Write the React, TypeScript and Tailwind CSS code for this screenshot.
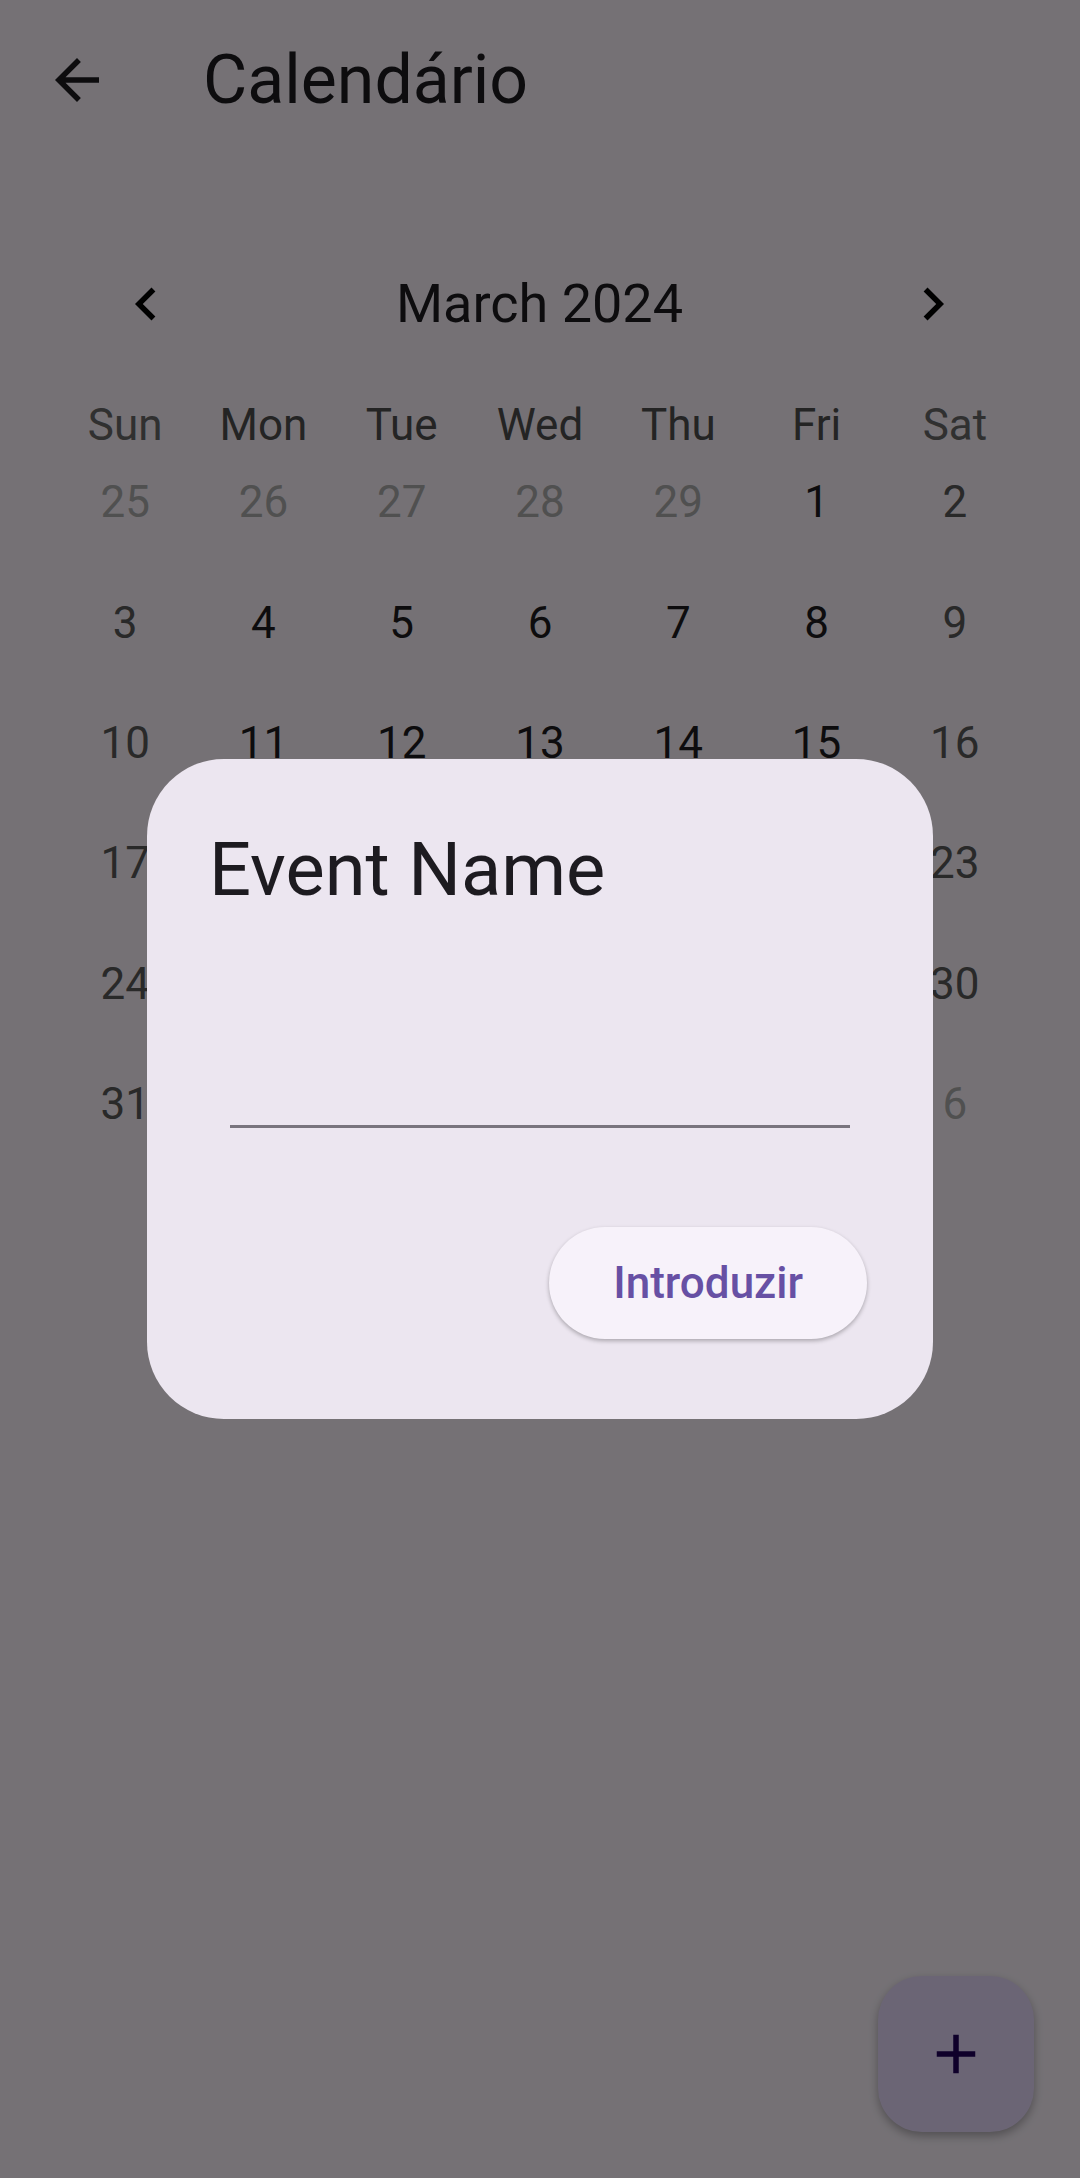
import React from 'react';

const weekdays = ['Sun', 'Mon', 'Tue', 'Wed', 'Thu', 'Fri', 'Sat'];

// March 2024 grid, including outside days
const weeks: { d: number; out?: boolean }[][] = [
  [{ d: 25, out: true }, { d: 26, out: true }, { d: 27, out: true }, { d: 28, out: true }, { d: 29, out: true }, { d: 1 }, { d: 2 }],
  [{ d: 3 }, { d: 4 }, { d: 5 }, { d: 6 }, { d: 7 }, { d: 8 }, { d: 9 }],
  [{ d: 10 }, { d: 11 }, { d: 12 }, { d: 13 }, { d: 14 }, { d: 15 }, { d: 16 }],
  [{ d: 17 }, { d: 18 }, { d: 19 }, { d: 20 }, { d: 21 }, { d: 22 }, { d: 23 }],
  [{ d: 24 }, { d: 25 }, { d: 26 }, { d: 27 }, { d: 28 }, { d: 29 }, { d: 30 }],
  [{ d: 31 }, { d: 1, out: true }, { d: 2, out: true }, { d: 3, out: true }, { d: 4, out: true }, { d: 5, out: true }, { d: 6, out: true }],
];

function dayColor(col: number, out?: boolean) {
  if (out) return 'text-[#aeaeae]';
  if (col === 0 || col === 6) return 'text-[#5a5a5a]';
  return 'text-[#1d1b20]';
}

export default function App() {
  return (
    <div
      className="relative h-screen w-full overflow-hidden bg-[#fef7ff]"
      style={{ fontFamily: 'Roboto, "Noto Sans", sans-serif' }}
    >
      {/* App bar */}
      <header className="flex h-[160px] items-center">
        <div className="flex w-[154px] items-center justify-center">
          <svg viewBox="0 0 24 24" className="h-[66px] w-[66px] fill-[#1d1b20]">
            <path d="M20 11H7.83l5.59-5.59L12 4l-8 8 8 8 1.41-1.41L7.83 13H20v-2z" />
          </svg>
        </div>
        <h1 className="ml-[49px] text-[68px] leading-none text-[#1d1b20]">Calendário</h1>
      </header>

      {/* Month header */}
      <div className="mt-[84px] flex h-[120px] items-center justify-between pl-[113px] pr-[114px]">
        <svg viewBox="0 0 24 24" className="h-[66px] w-[66px] fill-black">
          <path d="M15.41 7.41L14 6l-6 6 6 6 1.41-1.41L10.83 12z" />
        </svg>
        <div className="flex-1 text-center text-[54px] leading-none text-[#1d1b20]">March 2024</div>
        <svg viewBox="0 0 24 24" className="h-[66px] w-[66px] fill-black">
          <path d="M8.59 16.59L10 18l6-6-6-6-1.41 1.41L13.17 12z" />
        </svg>
      </div>

      {/* Days of week */}
      <div className="mt-[39px] grid h-[34px] grid-cols-7 px-[56px]">
        {weekdays.map((w, i) => (
          <div
            key={w}
            className={`flex items-center justify-center text-[44px] leading-none ${
              i === 0 || i === 6 ? 'text-[#6a6a6a]' : 'text-[#4f4f4f]'
            }`}
          >
            {w}
          </div>
        ))}
      </div>

      {/* Day grid */}
      <div className="mt-[5px] px-[56px]">
        {weeks.map((week, r) => (
          <div key={r} className="grid h-[120.4px] grid-cols-7">
            {week.map((c, i) => (
              <div
                key={i}
                className={`flex items-center justify-center text-[44px] leading-none ${dayColor(i, c.out)}`}
              >
                {c.d}
              </div>
            ))}
          </div>
        ))}
      </div>

      {/* FAB */}
      <button className="absolute bottom-[46px] right-[46px] flex h-[156px] w-[156px] items-center justify-center rounded-[44px] bg-[#eaddff] shadow-[0_4px_10px_rgba(0,0,0,0.3)]">
        <svg viewBox="0 0 24 24" className="h-[66px] w-[66px] fill-[#21005d]">
          <path d="M19 13h-6v6h-2v-6H5v-2h6V5h2v6h6v2z" />
        </svg>
      </button>

      {/* Modal barrier */}
      <div className="absolute inset-0 bg-[rgba(0,0,0,0.54)]" />

      {/* Dialog */}
      <div className="absolute inset-0 flex items-center justify-center">
        <div className="flex w-[786px] flex-col rounded-[77px] bg-[#ece6f0] px-[66px] pb-[80px] pt-[63px]">
          <h2 className="-ml-[4px] text-[74px] leading-[96px] text-[#1d1b20]">Event Name</h2>
          <div className="mx-[17px] mt-[144px] h-[66px] border-b-[3px] border-[#79747e]">
            <input className="h-full w-full bg-transparent text-[44px] text-[#1d1b20] outline-none" />
          </div>
          <div className="mt-[99px] flex justify-end">
            <button className="flex h-[112px] items-center rounded-full bg-[#f7f2fa] px-[64px] text-[44px] font-medium text-[#6750a4] shadow-[0_2px_4px_rgba(0,0,0,0.28)]">
              Introduzir
            </button>
          </div>
        </div>
      </div>
    </div>
  );
}
